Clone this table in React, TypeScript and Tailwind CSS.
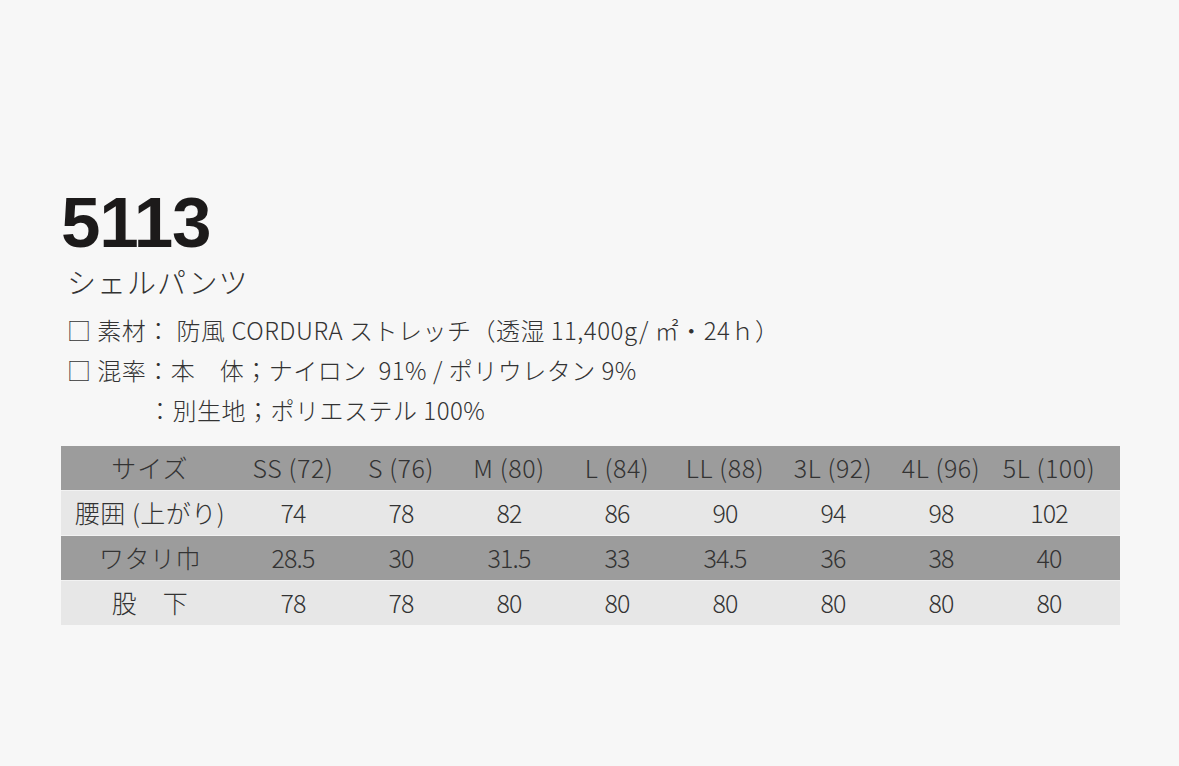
import React from "react";

const cols = ["SS (72)", "S (76)", "M (80)", "L (84)", "LL (88)", "3L (92)", "4L (96)", "5L (100)"];
const rows: { label: string; vals: string[]; dark: boolean }[] = [
  { label: "腰囲 (上がり)", vals: ["74", "78", "82", "86", "90", "94", "98", "102"], dark: false },
  { label: "ワタリ巾", vals: ["28.5", "30", "31.5", "33", "34.5", "36", "38", "40"], dark: true },
  { label: "股　下", vals: ["78", "78", "80", "80", "80", "80", "80", "80"], dark: false },
];

const font = { fontFamily: '"Noto Sans CJK JP", "Noto Sans", sans-serif' };

export default function App() {
  return (
    <div className="w-[1179px] h-[766px] bg-[#f7f7f7] overflow-hidden" style={font}>
      <div className="pt-[183px] pl-[61px]">
        <div
          className="text-[71px] leading-[80px] font-bold text-[#1c1a1a] tracking-[-1.2px]"
          style={{ fontFamily: '"Liberation Sans", Arial, sans-serif' }}
        >
          5113
        </div>
        <div className="mt-[-2px] pl-[6px] text-[29px] leading-[40px] font-light text-[#333] tracking-[1px]">
          シェルパンツ
        </div>
        <div className="mt-[9px] pl-[6px] text-[24px] leading-[40px] font-light text-[#333] tracking-[0.5px]">
          <div>□ 素材： 防風 CORDURA ストレッチ（透湿 11,400g/ ㎡・24ｈ）</div>
          <div>□ 混率：本　体；ナイロン&nbsp; 91% / ポリウレタン&nbsp;9%</div>
          <div className="pl-[81px]">：別生地；ポリエステル&nbsp;100%</div>
        </div>
        <div className="mt-[16px] w-[1059px] text-[25px] font-light text-[#333]">
          <div className="grid grid-cols-[178px_repeat(8,108px)] h-[44px] items-center bg-[#9c9c9c] tracking-[0.6px]">
            <div className="text-center tracking-[1px]">サイズ</div>
            {cols.map((c) => (
              <div key={c} className="text-center whitespace-nowrap">
                {c}
              </div>
            ))}
          </div>
          {rows.map((r) => (
            <div
              key={r.label}
              className={`grid grid-cols-[178px_repeat(8,108px)] h-[45px] items-center border-t border-[#f2f2f2] ${
                r.dark ? "bg-[#9c9c9c]" : "bg-[#e7e7e7]"
              }`}
            >
              <div className="text-center whitespace-nowrap tracking-[0.5px]">{r.label}</div>
              {r.vals.map((v, i) => (
                <div key={i} className="text-center tracking-[-0.8px]">
                  {v}
                </div>
              ))}
            </div>
          ))}
        </div>
      </div>
    </div>
  );
}
